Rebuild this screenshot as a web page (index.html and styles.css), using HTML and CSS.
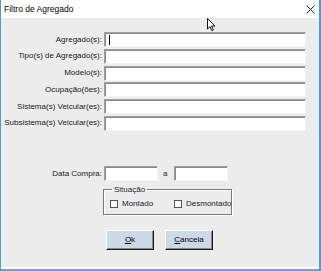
FILE: index.html
```html
<!DOCTYPE html>
<html lang="pt">
<head>
  <meta charset="UTF-8" />
  <title>Filtro de Agregado</title>
  <link rel="stylesheet" href="styles.css">
</head>
<body>

  <div class="window">
    <div class="title-bar">
      <span class="title">Filtro de Agregado</span>
      <span class="close-btn">
        <svg width="9" height="9" viewBox="0 0 9 9"><path d="M0.5 0.5 L8.5 8.5 M8.5 0.5 L0.5 8.5" stroke="#222" stroke-width="1"/></svg>
      </span>
    </div>

    <div class="client">
      <div class="fields">
        <label>Agregado(s):</label>
        <div class="edit"><span class="caret"></span></div>
        <label>Tipo(s) de Agregado(s):</label>
        <div class="edit"></div>
        <label>Modelo(s):</label>
        <div class="edit"></div>
        <label>Ocupação(ões):</label>
        <div class="edit"></div>
        <label>Sistema(s) Veicular(es):</label>
        <div class="edit"></div>
        <label>Subsistema(s) Veicular(es):</label>
        <div class="edit"></div>
      </div>

      <div class="date-row">
        <label>Data Compra:</label>
        <div class="edit date"></div>
        <span class="sep">a</span>
        <div class="edit date"></div>
      </div>

      <fieldset class="situacao">
        <legend>Situação</legend>
        <div class="checks">
          <span class="check"><span class="box"></span>Montado</span>
          <span class="check"><span class="box"></span>Desmontado</span>
        </div>
      </fieldset>

      <div class="buttons">
        <button class="btn"><u>O</u>k</button>
        <button class="btn"><u>C</u>ancela</button>
      </div>
    </div>

    <div class="bottom-edge"></div>

    <svg class="cursor" width="9" height="14" viewBox="0 0 9 14">
      <path d="M0.5 0.5 L0.5 11 L3 8.6 L4.8 12.6 L6.3 11.9 L4.6 8.1 L8 8.1 Z" fill="#fff" stroke="#111" stroke-width="1" stroke-linejoin="round"/>
    </svg>
  </div>

</body>
</html>
```

FILE: styles.css
```css
* {
  box-sizing: border-box;
}

html, body {
  margin: 0;
  width: 321px;
  height: 271px;
  overflow: hidden;
  font-family: 'Liberation Sans', Arial, sans-serif;
  font-size: 8px;
  color: #1a1a1a;
}

.window {
  position: relative;
  width: 321px;
  height: 271px;
  display: flex;
  flex-direction: column;
  border-left: 1px solid #4a9be0;
  border-right: 2px solid #4a9be0;
  background: #fff;
}

.title-bar {
  height: 18px;
  display: flex;
  align-items: center;
  justify-content: space-between;
  padding-left: 3px;
  background: #fff;
}

.title {
  font-size: 8.5px;
  color: #000;
}

.close-btn {
  width: 18px;
  height: 18px;
  display: flex;
  align-items: center;
  justify-content: center;
}

.close-btn svg {
  display: block;
}

.client {
  flex: 1;
  background: #ececec;
  padding-top: 14px;
}

.fields {
  display: grid;
  grid-template-columns: 101px 202px;
  column-gap: 2px;
  row-gap: 1.8px;
  align-items: center;
}

.fields label,
.date-row label {
  text-align: right;
  line-height: 10px;
}

.edit {
  position: relative;
  height: 15px;
  background: #fff;
  border: 1px solid;
  border-color: #a0a0a0 #f4f4f4 #f4f4f4 #a0a0a0;
  box-shadow: inset 1px 1px 0 #8a8a8a;
}

.caret {
  position: absolute;
  left: 4px;
  top: 2px;
  width: 1px;
  height: 10px;
  background: #000;
}

.date-row {
  display: flex;
  align-items: center;
  margin-top: 35.5px;
}

.date-row label {
  width: 101px;
  margin-right: 2px;
}

.edit.date {
  width: 54px;
}

.sep {
  width: 16px;
  padding-left: 5px;
}

.situacao {
  margin: 3.5px 0 0 102px;
  width: 129px;
  padding: 4px 0 5px 6px;
  border: 1px solid #7a7a7a;
  box-shadow: 1px 1px 0 #fff, inset 1px 1px 0 #fff;
}

.situacao legend {
  padding: 0 2px;
  margin-left: 2px;
  line-height: 10px;
}

.checks {
  display: flex;
  line-height: 10px;
}

.check {
  display: flex;
  align-items: center;
}

.check:first-child {
  width: 64px;
}

.box {
  width: 8px;
  height: 8px;
  background: #fff;
  border: 1px solid #555;
  margin-right: 4px;
}

.buttons {
  display: flex;
  gap: 11px;
  margin: 15px 0 0 105px;
}

.btn {
  width: 48px;
  height: 20px;
  padding: 0;
  font-family: 'Liberation Sans', Arial, sans-serif;
  font-size: 8px;
  color: #000;
  background: #cbd9e8;
  border: 1px solid;
  border-color: #fff #1a1a1a #1a1a1a #fff;
  box-shadow: inset -1px -1px 0 #8a8a8a;
}

.bottom-edge {
  height: 4px;
  border-top: 2px solid #fff;
  background: #6aa2d6;
}

.cursor {
  position: absolute;
  left: 206px;
  top: 18px;
}
```
